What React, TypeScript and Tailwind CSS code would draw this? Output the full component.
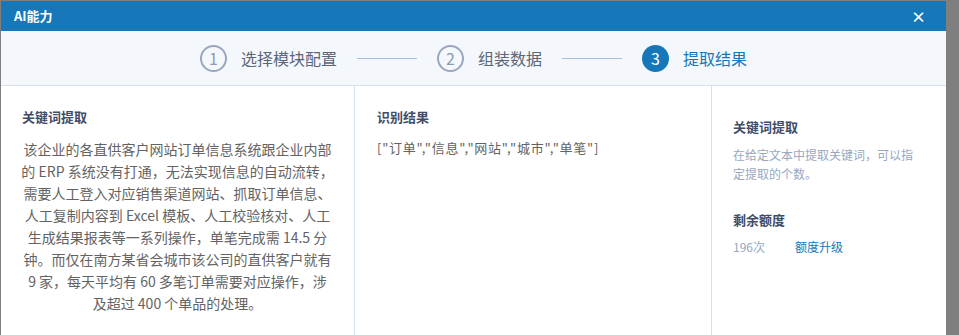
import React from "react";

const font = { fontFamily: '"Noto Sans CJK SC", "Noto Sans", sans-serif' };

function Step({ n, label, active }: { n: number; label: string; active?: boolean }) {
  return (
    <div className="flex items-center gap-[14px]">
      <div
        className={
          active
            ? "w-[27px] h-[27px] rounded-full bg-[#1677b9] text-white flex items-center justify-center text-[16px] leading-none"
            : "w-[27px] h-[27px] rounded-full border-2 border-[#9aa6c0] text-[#8e9ab4] flex items-center justify-center text-[16px] leading-none"
        }
      >
        {n}
      </div>
      <div className={active ? "text-[16px] text-[#1677b9]" : "text-[16px] text-[#5a6679]"}>{label}</div>
    </div>
  );
}

function Line() {
  return <div className="w-[60px] h-px bg-[#a9c0dc] mx-[20px]" />;
}

const lines = [
  "该企业的各直供客户网站订单信息系统跟企业内部",
  "的 ERP 系统没有打通，无法实现信息的自动流转，",
  "需要人工登入对应销售渠道网站、抓取订单信息、",
  "人工复制内容到 Excel 模板、人工校验核对、人工",
  "生成结果报表等一系列操作，单笔完成需 14.5 分",
  "钟。而仅在南方某省会城市该公司的直供客户就有",
  "9 家，每天平均有 60 多笔订单需要对应操作，涉",
  "及超过 400 个单品的处理。",
];

export default function App() {
  return (
    <div className="w-[959px] h-[335px] bg-[#7f7f7f] pt-px pl-px overflow-hidden" style={font}>
      <div className="w-[945px] h-[334px] bg-white flex flex-col">
        <div className="h-[30px] bg-[#1677b9] flex items-center justify-between pl-[13px] pr-[20px] shrink-0">
          <span className="text-white text-[13px] font-bold">AI能力</span>
          <span className="text-white text-[15px] leading-none font-bold">×</span>
        </div>
        <div className="h-[55px] bg-[#f4f8fc] border-b border-[#d6e1ee] flex items-center justify-center shrink-0">
          <Step n={1} label="选择模块配置" />
          <Line />
          <Step n={2} label="组装数据" />
          <Line />
          <Step n={3} label="提取结果" active />
        </div>
        <div className="flex flex-1">
          <div className="w-[354px] border-r border-[#d6e1ee] px-[12px] pt-[21px]">
            <div className="text-[13px] font-bold text-[#3f4d68] leading-[20px] pl-[9px]">关键词提取</div>
            <div className="mt-[11px] text-[14px] leading-[22px] text-[#636363] text-center">
              {lines.map((l, i) => (
                <div key={i} className="whitespace-nowrap">{l}</div>
              ))}
            </div>
          </div>
          <div className="w-[357px] border-r border-[#d6e1ee] px-[22px] pt-[21px]">
            <div className="text-[13px] font-bold text-[#3f4d68] leading-[20px]">识别结果</div>
            <div className="mt-[11px] text-[13px] leading-[20px] text-[#636363] tracking-[0.75px] whitespace-nowrap">
              ["订单","信息","网站","城市","单笔"]
            </div>
          </div>
          <div className="flex-1 px-[21px] pt-[31px]">
            <div className="text-[13px] font-bold text-[#3f4d68] leading-[20px]">关键词提取</div>
            <div className="mt-[8px] text-[12px] leading-[19px] text-[#97a7c2] w-[186px]">
              在给定文本中提取关键词，可以指定提取的个数。
            </div>
            <div className="mt-[27px] text-[13px] font-bold text-[#3f4d68] leading-[20px]">剩余额度</div>
            <div className="mt-[7px] flex text-[12px] leading-[20px]">
              <span className="w-[62px] text-[#97a7c2]">196次</span>
              <span className="text-[#1677b9]">额度升级</span>
            </div>
          </div>
        </div>
      </div>
    </div>
  );
}
